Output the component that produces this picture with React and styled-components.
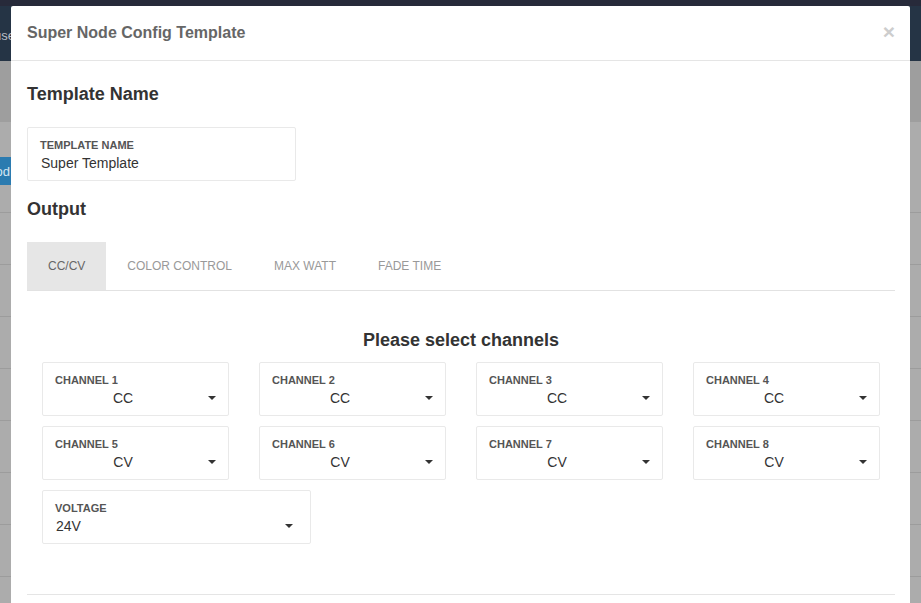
import React from "react";
import styled, { createGlobalStyle } from "styled-components";

const GlobalStyle = createGlobalStyle`
  html, body { margin: 0; padding: 0; }
  body {
    font-family: "Liberation Sans", Arial, Helvetica, sans-serif;
    overflow: hidden;
    background: #acacac;
  }
  * { box-sizing: border-box; }
`;

const Page = styled.div`
  position: relative;
  width: 921px;
  height: 603px;
  overflow: hidden;
  background: #acacac;
`;

const TopStrip = styled.div`
  height: 6px;
  background: #272a3a;
`;

const BgHeader = styled.div`
  height: 55px;
  background: #253445;
  display: flex;
  align-items: center;
  color: #b9bfc7;
  font-size: 13px;
`;

const BgHeaderText = styled.span`
  margin-left: -6px;
  margin-top: 4px;
`;

const BgSubbar = styled.div`
  height: 61px;
  background: #9e9e9e;
`;

const BgTop = styled.div`
  height: 90px;
  padding-top: 35px;
`;

const BgButton = styled.div`
  width: 60px;
  height: 28px;
  margin-left: -48px;
  background: #2b7bb0;
  color: #d5e6f2;
  font-size: 13px;
  display: flex;
  align-items: center;
  justify-content: flex-end;
  padding-right: 2px;
`;

const BgRow = styled.div`
  height: 52px;
  border-top: 1px solid #9c9c9c;
`;

const Modal = styled.div`
  position: absolute;
  top: 6px;
  left: 11px;
  width: 899px;
  height: 620px;
  background: #fff;
  border-radius: 2px;
  display: flex;
  flex-direction: column;
`;

const ModalHeader = styled.div`
  height: 55px;
  border-bottom: 1px solid #e5e5e5;
  padding: 0 15px 0 16px;
  display: flex;
  align-items: center;
  justify-content: space-between;
`;

const ModalTitle = styled.h4`
  margin: 0;
  font-size: 16px;
  font-weight: bold;
  color: #666;
`;

const CloseBtn = styled.span`
  font-size: 21px;
  font-weight: bold;
  color: #cdcdcd;
  line-height: 1;
  margin-top: -4px;
`;

const ModalBody = styled.div`
  padding: 0 15px 0 16px;
  flex: 1;
`;

const SectionTitle = styled.h3`
  margin: 0;
  font-size: 18px;
  font-weight: bold;
  color: #333;
  line-height: 22px;
  margin-top: ${(p) => p.$mt}px;
`;

const Field = styled.div`
  border: 1px solid #e9e9e9;
  border-radius: 2px;
  height: 54px;
  width: ${(p) => (p.$w ? `${p.$w}px` : "100%")};
  padding: 10px ${(p) => p.$pr || 12}px 0 12px;
  margin-top: ${(p) => p.$mt || 0}px;
  background: #fff;
`;

const FieldLabel = styled.div`
  font-size: 11px;
  font-weight: bold;
  color: #555;
  line-height: 14px;
  text-transform: uppercase;
`;

const FieldValue = styled.div`
  font-size: 14px;
  color: #333;
  line-height: 18px;
  margin-top: 2px;
  display: flex;
  align-items: center;
`;

const ValueText = styled.span`
  flex: 1;
  text-align: ${(p) => (p.$center ? "center" : "left")};
  padding-right: ${(p) => (p.$center ? "18px" : "0")};
  padding-left: 1px;
`;

const Caret = styled.span`
  width: 0;
  height: 0;
  border-left: 4px solid transparent;
  border-right: 4px solid transparent;
  border-top: 4px solid #333;
  flex: none;
`;

const Tabs = styled.div`
  display: flex;
  margin-top: 22px;
  border-bottom: 1px solid #e2e2e2;
  height: 49px;
`;

const Tab = styled.div`
  height: 48px;
  padding: 0 21px;
  display: flex;
  align-items: center;
  font-size: 12px;
  text-transform: uppercase;
  color: ${(p) => (p.$active ? "#666" : "#999")};
  background: ${(p) => (p.$active ? "#e6e6e6" : "transparent")};
`;

const ChannelsTitle = styled.h4`
  margin: 39px 0 0;
  text-align: center;
  font-size: 18px;
  font-weight: bold;
  color: #333;
  line-height: 20px;
`;

const Grid = styled.div`
  display: grid;
  grid-template-columns: repeat(4, 187px);
  column-gap: 30px;
  row-gap: 10px;
  padding: 0 15px;
  margin-top: 12px;
`;

const VoltageRow = styled.div`
  padding: 0 15px;
  margin-top: 10px;
`;

const FooterLine = styled.div`
  border-top: 1px solid #e5e5e5;
  margin-top: 50px;
`;

function Select({ label, value, center, w, pr }) {
  return (
    <Field $w={w} $pr={pr}>
      <FieldLabel>{label}</FieldLabel>
      <FieldValue>
        <ValueText $center={center}>{value}</ValueText>
        <Caret />
      </FieldValue>
    </Field>
  );
}

const channels = [
  ["CHANNEL 1", "CC"],
  ["CHANNEL 2", "CC"],
  ["CHANNEL 3", "CC"],
  ["CHANNEL 4", "CC"],
  ["CHANNEL 5", "CV"],
  ["CHANNEL 6", "CV"],
  ["CHANNEL 7", "CV"],
  ["CHANNEL 8", "CV"],
];

export default function App() {
  return (
    <>
      <GlobalStyle />
      <Page>
        <TopStrip />
        <BgHeader>
          <BgHeaderText>use</BgHeaderText>
        </BgHeader>
        <BgSubbar />
        <BgTop>
          <BgButton>od</BgButton>
        </BgTop>
        {Array.from({ length: 8 }).map((_, i) => (
          <BgRow key={i} />
        ))}
        <Modal>
          <ModalHeader>
            <ModalTitle>Super Node Config Template</ModalTitle>
            <CloseBtn>×</CloseBtn>
          </ModalHeader>
          <ModalBody>
            <SectionTitle $mt={22}>Template Name</SectionTitle>
            <Field $w={269} $mt={22}>
              <FieldLabel>Template Name</FieldLabel>
              <FieldValue>
                <ValueText>Super Template</ValueText>
              </FieldValue>
            </Field>
            <SectionTitle $mt={17}>Output</SectionTitle>
            <Tabs>
              <Tab $active>CC/CV</Tab>
              <Tab>Color Control</Tab>
              <Tab>Max Watt</Tab>
              <Tab>Fade Time</Tab>
            </Tabs>
            <ChannelsTitle>Please select channels</ChannelsTitle>
            <Grid>
              {channels.map(([l, v]) => (
                <Select key={l} label={l} value={v} center />
              ))}
            </Grid>
            <VoltageRow>
              <Select label="VOLTAGE" value="24V" w={269} pr={17} />
            </VoltageRow>
            <FooterLine />
          </ModalBody>
        </Modal>
      </Page>
    </>
  );
}
